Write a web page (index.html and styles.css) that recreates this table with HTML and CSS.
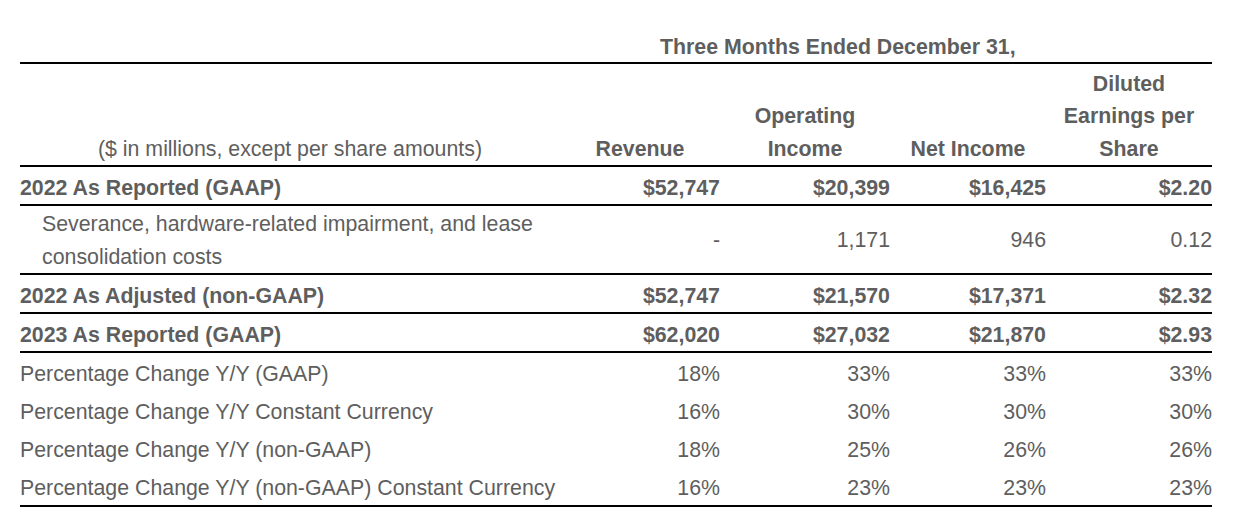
FILE: index.html
```html
<!DOCTYPE html>
<html>
<head>
<meta charset="utf-8">
<link rel="stylesheet" href="styles.css">
</head>
<body>
<div class="wrap">
<table class="fin">
  <colgroup>
    <col class="c-label">
    <col class="c-rev">
    <col class="c-op">
    <col class="c-ni">
    <col class="c-eps">
  </colgroup>
  <thead>
    <tr class="period">
      <th></th>
      <th colspan="4" class="period-title">Three Months Ended December 31,</th>
    </tr>
    <tr class="heads">
      <th class="units">($ in millions, except per share amounts)</th>
      <th>Revenue</th>
      <th>Operating<br>Income</th>
      <th>Net Income</th>
      <th>Diluted<br>Earnings per<br>Share</th>
    </tr>
  </thead>
  <tbody>
    <tr class="bold ruled">
      <td class="label">2022 As Reported (GAAP)</td>
      <td class="num">$52,747</td>
      <td class="num">$20,399</td>
      <td class="num">$16,425</td>
      <td class="num">$2.20</td>
    </tr>
    <tr class="ruled tall">
      <td class="label indent">Severance, hardware-related impairment, and lease<br>consolidation costs</td>
      <td class="num">-</td>
      <td class="num">1,171</td>
      <td class="num">946</td>
      <td class="num">0.12</td>
    </tr>
    <tr class="bold ruled">
      <td class="label">2022 As Adjusted (non-GAAP)</td>
      <td class="num">$52,747</td>
      <td class="num">$21,570</td>
      <td class="num">$17,371</td>
      <td class="num">$2.32</td>
    </tr>
    <tr class="bold ruled">
      <td class="label">2023 As Reported (GAAP)</td>
      <td class="num">$62,020</td>
      <td class="num">$27,032</td>
      <td class="num">$21,870</td>
      <td class="num">$2.93</td>
    </tr>
    <tr class="plain">
      <td class="label">Percentage Change Y/Y (GAAP)</td>
      <td class="num">18%</td>
      <td class="num">33%</td>
      <td class="num">33%</td>
      <td class="num">33%</td>
    </tr>
    <tr class="plain">
      <td class="label">Percentage Change Y/Y Constant Currency</td>
      <td class="num">16%</td>
      <td class="num">30%</td>
      <td class="num">30%</td>
      <td class="num">30%</td>
    </tr>
    <tr class="plain">
      <td class="label">Percentage Change Y/Y (non-GAAP)</td>
      <td class="num">18%</td>
      <td class="num">25%</td>
      <td class="num">26%</td>
      <td class="num">26%</td>
    </tr>
    <tr class="plain ruled">
      <td class="label">Percentage Change Y/Y (non-GAAP) Constant Currency</td>
      <td class="num">16%</td>
      <td class="num">23%</td>
      <td class="num">23%</td>
      <td class="num">23%</td>
    </tr>
  </tbody>
</table>
</div>
</body>
</html>
```

FILE: styles.css
```css
html, body {
  margin: 0;
  padding: 0;
  background: #ffffff;
}

body {
  font-family: "Liberation Sans", Arial, Helvetica, sans-serif;
  font-size: 21.33px;
  line-height: 34px;
  color: #5e5e5e;
}

.wrap {
  padding: 32px 0 0 20px;
}

.fin {
  border-collapse: collapse;
  width: 1192px;
  table-layout: fixed;
}

.c-label { width: 540px; }
.c-rev { width: 160px; }
.c-op { width: 170px; }
.c-ni { width: 156px; }
.c-eps { width: 166px; }

.fin th,
.fin td {
  padding: 4.5px 0 0.5px;
  line-height: 32px;
  white-space: nowrap;
}

.fin th {
  font-weight: bold;
  text-align: center;
  vertical-align: bottom;
}

.fin .period th {
  padding: 0;
  line-height: 30px;
}

.fin .period .period-title {
  text-align: left;
  padding-left: 100px;
}

.fin .heads th {
  padding: 3.5px 0 0;
  line-height: 32.5px;
  border-top: 2px solid #000;
  border-bottom: 2px solid #000;
}

.fin .heads .units {
  font-weight: normal;
}

.fin td {
  vertical-align: middle;
}

.label {
  text-align: left;
}

.fin .indent {
  padding-left: 22px;
}

.num {
  text-align: right;
}

.bold td {
  font-weight: bold;
}

.ruled td {
  border-bottom: 2px solid #000;
}

.fin .plain td {
  padding: 5px 0 1px;
}

.fin .tall td {
  padding-top: 2px;
  padding-bottom: 0;
  line-height: 32.5px;
}
```
